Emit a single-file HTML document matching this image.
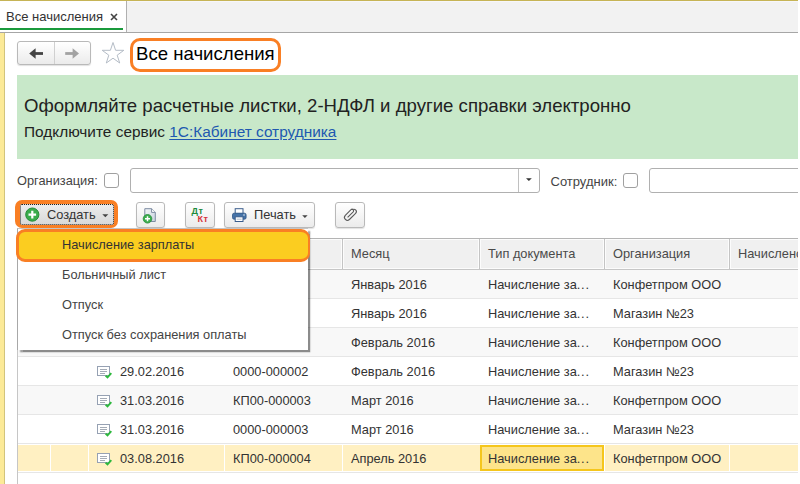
<!DOCTYPE html>
<html><head><meta charset="utf-8">
<style>
*{box-sizing:border-box;margin:0;padding:0}
html,body{width:800px;height:484px;overflow:hidden;background:#fff;font-family:"Liberation Sans",sans-serif;color:#333}
.abs{position:absolute}
#root{position:relative;width:800px;height:484px;overflow:hidden;background:#fff}
.t{position:absolute;white-space:nowrap;line-height:1}
.btn{position:absolute;border:1px solid #b9b9b9;border-radius:3px;background:linear-gradient(#ffffff,#ebebeb);box-shadow:0 1px 1px rgba(0,0,0,.12)}
.fld{position:absolute;border:1px solid #b0b0b0;border-radius:3px;background:#fff}
.cb{position:absolute;width:15px;height:15px;border:1px solid #a0a0a0;border-radius:3px;background:#fff}
.row{position:absolute;left:18px;width:782px;height:29px;border-bottom:1px solid #e6e6e6}
.c{position:absolute;white-space:nowrap;line-height:1;font-size:12.8px;color:#333}
.h{position:absolute;white-space:nowrap;line-height:1;font-size:12.8px;color:#4a4a4a}
.vs{position:absolute;width:1px;background:#d4d4d4}
</style></head><body>
<div id="root">
<!-- top bar -->
<div class="abs" style="left:0;top:0;width:800px;height:33px;background:#f2f2f2;border-bottom:1px solid #a6a6a6"></div>
<div class="abs" style="left:0;top:0;width:800px;height:1px;background:#c6b456"></div><div class="abs" style="left:0;top:1px;width:800px;height:1px;background:#f7f7fa"></div>
<div class="abs" style="left:0;top:1px;width:127px;height:31px;background:#fff;border-right:1px solid #b0b0b0"></div>
<div class="abs" style="left:0;top:28px;width:123px;height:2px;background:#1a9a3c"></div>
<div class="t" style="left:6px;top:10px;font-size:13px;color:#333">Все начисления</div>
<svg class="abs" style="left:110px;top:13px" width="8" height="8" viewBox="0 0 8 8"><path d="M1 1L7 7M7 1L1 7" stroke="#444" stroke-width="1.6"/></svg>
<!-- left strip -->
<div class="abs" style="left:0;top:33px;width:5px;height:451px;background:#fcea98;border-right:1px solid #d2c47c"></div>
<!-- nav buttons -->
<div class="btn" style="left:17px;top:41px;width:74px;height:24px"></div>
<div class="abs" style="left:54px;top:42px;width:1px;height:22px;background:#d0d0d0"></div>
<svg class="abs" style="left:29px;top:47px" width="16" height="13" viewBox="0 0 16 13"><path d="M4 6.5H14" stroke="#444" stroke-width="2.8"/><path d="M0.2 6.5L6.6 1.2V11.8Z" fill="#444"/></svg>
<svg class="abs" style="left:65px;top:47px" width="16" height="13" viewBox="0 0 16 13"><path d="M0.2 6.5H10" stroke="#a2a2a2" stroke-width="2.8"/><path d="M14 6.5L7.6 1.2V11.8Z" fill="#a2a2a2"/></svg>
<!-- star -->
<svg class="abs" style="left:101px;top:41px" width="24" height="24" viewBox="0 0 24 24"><path d="M12 1.5L14.6 9.3H22.8L16.2 14.2L18.7 22L12 17.2L5.3 22L7.8 14.2L1.2 9.3H9.4Z" fill="#fff" stroke="#b4bcc6" stroke-width="1"/></svg>
<!-- title -->
<div class="abs" style="left:130px;top:38px;width:151px;height:33.5px;border:3px solid #f97f24;border-radius:10px"></div>
<div class="t" style="left:136px;top:45px;font-size:18.6px;color:#000">Все начисления</div>
<!-- green banner -->
<div class="abs" style="left:17px;top:75px;width:783px;height:84px;background:#c8e8c9"></div>
<div class="t" style="left:24px;top:97px;font-size:18.6px;color:#222">Оформляйте расчетные листки, 2-НДФЛ и другие справки электронно</div>
<div class="t" style="left:24px;top:124px;font-size:15.4px;color:#222">Подключите сервис <span style="color:#2058b0;text-decoration:underline;text-underline-offset:2px;text-decoration-thickness:1px">1С:Кабинет сотрудника</span></div>
<!-- filter row -->
<div class="t" style="left:17px;top:175px;font-size:12.8px;color:#444">Организация:</div>
<div class="cb" style="left:104px;top:173px"></div>
<div class="fld" style="left:130px;top:168px;width:410px;height:25px"></div>
<div class="abs" style="left:518px;top:169px;width:1px;height:23px;background:#c0c0c0"></div>
<svg class="abs" style="left:526px;top:178px" width="7" height="4" viewBox="0 0 7 4"><path d="M0 0.2H5.8L2.9 3.1Z" fill="#333"/></svg>
<div class="t" style="left:550.5px;top:175px;font-size:13px;color:#444">Сотрудник:</div>
<div class="cb" style="left:623px;top:173px"></div>
<div class="fld" style="left:649px;top:168px;width:160px;height:25px"></div>

<!-- table -->
<div class="abs" style="left:17px;top:238px;width:783px;height:246px;border-left:1px solid #c6c6c6;border-top:1px solid #b4b4b4"></div>
<div class="abs" style="left:18px;top:239px;width:782px;height:30px;background:#f0f0f0"></div>
<div class="abs" style="left:18px;top:239px;width:324px;height:30px;border:1px solid #fcfcfc"></div>
<div class="abs" style="left:343px;top:239px;width:136px;height:30px;border:1px solid #fcfcfc"></div>
<div class="abs" style="left:480px;top:239px;width:124px;height:30px;border:1px solid #fcfcfc"></div>
<div class="abs" style="left:605px;top:239px;width:124px;height:30px;border:1px solid #fcfcfc"></div>
<div class="abs" style="left:730px;top:239px;width:70px;height:30px;border:1px solid #fcfcfc"></div>
<div class="vs" style="left:342px;top:239px;height:30px;background:#c4c4c4"></div>
<div class="vs" style="left:479px;top:239px;height:30px;background:#c4c4c4"></div>
<div class="vs" style="left:604px;top:239px;height:30px;background:#c4c4c4"></div>
<div class="vs" style="left:729px;top:239px;height:30px;background:#c4c4c4"></div>
<div class="abs" style="left:18px;top:269px;width:782px;height:1px;background:#c6c6c6"></div>
<div class="h" style="left:351px;top:247.6px">Месяц</div>
<div class="h" style="left:488px;top:247.6px">Тип документа</div>
<div class="h" style="left:613px;top:247.6px">Организация</div>
<div class="h" style="left:738px;top:247.6px">Начислено</div>

<div class="row" style="top:270px;background:#f8f8f8"></div>
<div class="row" style="top:299px;background:#fff"></div>
<div class="row" style="top:328px;background:#f8f8f8"></div>
<div class="row" style="top:357px;background:#fff"></div>
<div class="row" style="top:386px;background:#f8f8f8"></div>
<div class="row" style="top:415px;background:#fff"></div>
<div class="abs" style="left:18px;top:445px;width:782px;height:26px;background:#fff0c2"></div><div class="abs" style="left:18px;top:472px;width:782px;height:1px;background:#e6e6e6"></div>
<div class="vs" style="left:50px;top:445px;height:26px;background:#fff"></div>
<div class="vs" style="left:88px;top:445px;height:26px;background:#fff"></div>
<div class="vs" style="left:224px;top:445px;height:26px;background:#fff"></div>
<div class="vs" style="left:342px;top:445px;height:26px;background:#fff"></div>
<div class="vs" style="left:604px;top:445px;height:26px;background:#fff"></div>
<div class="vs" style="left:729px;top:445px;height:26px;background:#fff"></div>
<div class="abs" style="left:480px;top:445px;width:124px;height:26px;background:#fde48a;border:2px solid #f5c61c"></div>

<div class="c" style="left:351px;top:279px">Январь 2016</div>
<div class="c" style="left:488px;top:279px">Начисление за<span style="letter-spacing:.8px">...</span></div>
<div class="c" style="left:613px;top:279px">Конфетпром ООО</div>
<div class="c" style="left:351px;top:308px">Январь 2016</div>
<div class="c" style="left:488px;top:308px">Начисление за<span style="letter-spacing:.8px">...</span></div>
<div class="c" style="left:613px;top:308px">Магазин №23</div>
<div class="c" style="left:351px;top:337px">Февраль 2016</div>
<div class="c" style="left:488px;top:337px">Начисление за<span style="letter-spacing:.8px">...</span></div>
<div class="c" style="left:613px;top:337px">Конфетпром ООО</div>
<svg class="abs" style="left:97px;top:365px" width="16" height="14" viewBox="0 0 16 14"><rect x="0.5" y="1.5" width="12" height="9" fill="#fff" stroke="#96a1b3"/><path d="M3 4.5H10M3 6.5H10M3 8.5H8" stroke="#a4abb6" stroke-width="1"/><path d="M8.6 10.6L10.5 12.4L14.3 8.2" fill="none" stroke="#2db83d" stroke-width="1.9"/></svg>
<div class="c" style="left:120px;top:366px">29.02.2016</div>
<div class="c" style="left:233px;top:366px">0000-000002</div>
<div class="c" style="left:351px;top:366px">Февраль 2016</div>
<div class="c" style="left:488px;top:366px">Начисление за<span style="letter-spacing:.8px">...</span></div>
<div class="c" style="left:613px;top:366px">Магазин №23</div>
<svg class="abs" style="left:97px;top:394px" width="16" height="14" viewBox="0 0 16 14"><rect x="0.5" y="1.5" width="12" height="9" fill="#fff" stroke="#96a1b3"/><path d="M3 4.5H10M3 6.5H10M3 8.5H8" stroke="#a4abb6" stroke-width="1"/><path d="M8.6 10.6L10.5 12.4L14.3 8.2" fill="none" stroke="#2db83d" stroke-width="1.9"/></svg>
<div class="c" style="left:120px;top:395px">31.03.2016</div>
<div class="c" style="left:233px;top:395px">КП00-000003</div>
<div class="c" style="left:351px;top:395px">Март 2016</div>
<div class="c" style="left:488px;top:395px">Начисление за<span style="letter-spacing:.8px">...</span></div>
<div class="c" style="left:613px;top:395px">Конфетпром ООО</div>
<svg class="abs" style="left:97px;top:423px" width="16" height="14" viewBox="0 0 16 14"><rect x="0.5" y="1.5" width="12" height="9" fill="#fff" stroke="#96a1b3"/><path d="M3 4.5H10M3 6.5H10M3 8.5H8" stroke="#a4abb6" stroke-width="1"/><path d="M8.6 10.6L10.5 12.4L14.3 8.2" fill="none" stroke="#2db83d" stroke-width="1.9"/></svg>
<div class="c" style="left:120px;top:424px">31.03.2016</div>
<div class="c" style="left:233px;top:424px">0000-000003</div>
<div class="c" style="left:351px;top:424px">Март 2016</div>
<div class="c" style="left:488px;top:424px">Начисление за<span style="letter-spacing:.8px">...</span></div>
<div class="c" style="left:613px;top:424px">Магазин №23</div>
<svg class="abs" style="left:97px;top:452px" width="16" height="14" viewBox="0 0 16 14"><rect x="0.5" y="1.5" width="12" height="9" fill="#fff" stroke="#96a1b3"/><path d="M3 4.5H10M3 6.5H10M3 8.5H8" stroke="#a4abb6" stroke-width="1"/><path d="M8.6 10.6L10.5 12.4L14.3 8.2" fill="none" stroke="#2db83d" stroke-width="1.9"/></svg>
<div class="c" style="left:120px;top:453px">03.08.2016</div>
<div class="c" style="left:233px;top:453px">КП00-000004</div>
<div class="c" style="left:351px;top:453px">Апрель 2016</div>
<div class="c" style="left:488px;top:453px">Начисление за<span style="letter-spacing:.8px">...</span></div>
<div class="c" style="left:613px;top:453px">Конфетпром ООО</div>
<!-- toolbar -->
<div class="abs" style="left:15px;top:200px;width:103px;height:28px;border:2px solid #f97f24;border-radius:7px;background:#f97f24"></div>
<div class="abs" style="left:19.5px;top:204px;width:94.5px;height:20.5px;border:1px dotted #222;border-radius:2px;background:linear-gradient(#ececec,#d9d9d9)"></div>
<svg class="abs" style="left:25px;top:207px" width="15" height="15" viewBox="0 0 15 15"><circle cx="7.3" cy="7.6" r="6.6" fill="#39ac4c" stroke="#258c38" stroke-width="1"/><path d="M7.3 3.8V11.4M3.5 7.6H11.1" stroke="#fff" stroke-width="2.2"/></svg>
<div class="t" style="left:47px;top:209px;font-size:12.8px;color:#333">Создать</div>
<svg class="abs" style="left:102px;top:214px" width="7" height="4" viewBox="0 0 7 4"><path d="M0.3 0.3H6.3L3.3 3.3Z" fill="#444"/></svg>

<div class="btn" style="left:136px;top:202px;width:29px;height:26px"></div>
<svg class="abs" style="left:142px;top:207px" width="16" height="18" viewBox="0 0 16 18"><defs><linearGradient id="pg" x1="0" y1="0" x2="1" y2="1"><stop offset="0" stop-color="#f4f6f9"/><stop offset="1" stop-color="#c9d2de"/></linearGradient></defs><path d="M2.8 1.7H9.6L13.3 5.4V14.5H2.8Z" fill="url(#pg)" stroke="#7d8ca2"/><path d="M9.6 1.7V5.4H13.3" fill="#fff" stroke="#7d8ca2"/><circle cx="5.5" cy="11.8" r="4.3" fill="#3aad4c" stroke="#258c38" stroke-width=".8"/><path d="M5.5 9.3V14.3M3 11.8H8" stroke="#fff" stroke-width="1.5"/></svg>

<div class="btn" style="left:185px;top:202px;width:30px;height:26px"></div>
<div class="t" style="left:191.5px;top:207px;font-size:9px;letter-spacing:.5px;font-weight:bold;color:#1d8a3c">Дт</div>
<div class="t" style="left:197.5px;top:215px;font-size:9px;letter-spacing:.5px;font-weight:bold;color:#d6303a">Кт</div>

<div class="btn" style="left:224px;top:202px;width:91px;height:26px"></div>
<svg class="abs" style="left:231px;top:207px" width="17" height="16" viewBox="0 0 17 16"><rect x="4.2" y="1.7" width="7.8" height="5" fill="#fff" stroke="#3a5d8c"/><rect x="1.5" y="6.2" width="13.6" height="6" rx="1.6" fill="#4573a8" stroke="#2f5686" stroke-width=".8"/><rect x="4.2" y="9.8" width="7.8" height="4.7" fill="#fff" stroke="#3a5d8c"/><path d="M5.6 12.2H10.6" stroke="#9aa9bd" stroke-width=".8"/><circle cx="13" cy="8" r=".7" fill="#fff"/></svg>
<div class="t" style="left:254px;top:209px;font-size:12.8px;color:#333">Печать</div>
<svg class="abs" style="left:302px;top:215px" width="7" height="4" viewBox="0 0 7 4"><path d="M0.2 0.2H5.6L2.9 3Z" fill="#444"/></svg>

<div class="btn" style="left:335px;top:202px;width:30px;height:26px"></div>
<svg class="abs" style="left:342px;top:206px" width="17" height="17" viewBox="0 0 17 17"><path d="M5.6 11.4L11.2 5.8A1.5 1.5 0 0 0 9 3.7L3.3 9.4A2.9 2.9 0 0 0 7.4 13.5L13.6 7.3A2.4 2.4 0 0 0 10.2 3.9" fill="none" stroke="#5a5a5a" stroke-width="1.1"/></svg>

<!-- popup menu -->
<div class="abs" style="left:17px;top:228px;width:291.4px;height:122px;background:#fff;border-left:1px solid #a8a8a8;border-top:1px solid #c4c4c4;box-shadow:2.6px 2.6px 1.4px rgba(0,0,0,.44)"></div>
<div class="abs" style="left:16px;top:229px;width:294px;height:33px;background:#fbcd20;border:3px solid #f97f24;border-right-width:2.5px;border-left-width:3.5px;border-radius:9px"></div>
<div class="t" style="left:62px;top:239px;font-size:12.8px;color:#333">Начисление зарплаты</div>
<div class="t" style="left:62px;top:269px;font-size:12.8px;color:#444">Больничный лист</div>
<div class="t" style="left:62px;top:299px;font-size:12.8px;color:#444">Отпуск</div>
<div class="t" style="left:62px;top:329px;font-size:12.8px;color:#444">Отпуск без сохранения оплаты</div>

<div class="abs" style="left:798px;top:0;width:2px;height:484px;background:#fff"></div>
</div>
</body></html>
